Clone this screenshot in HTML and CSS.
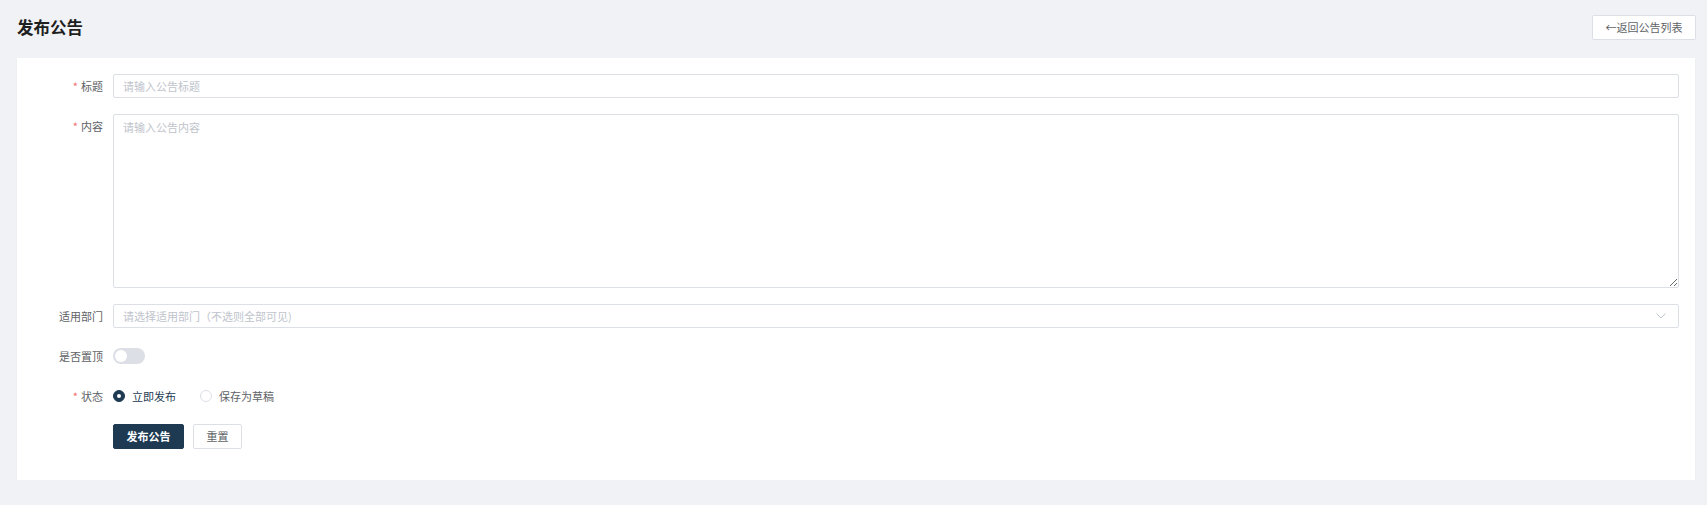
FILE: index.html
```html
<!DOCTYPE html>
<html lang="zh-CN">
<head>
<meta charset="utf-8">
<title>发布公告</title>
<link rel="stylesheet" href="styles.css">
</head>
<body>
<div class="page">
  <div class="header">
    <h1 class="title">发布公告</h1>
    <button class="btn btn-back">←返回公告列表</button>
  </div>
  <div class="card">
    <form class="form">
      <div class="row">
        <label class="label"><span class="req">*</span>标题</label>
        <input class="input" type="text" placeholder="请输入公告标题">
      </div>
      <div class="row">
        <label class="label label-top"><span class="req">*</span>内容</label>
        <textarea class="input textarea" placeholder="请输入公告内容"></textarea>
      </div>
      <div class="row">
        <label class="label">适用部门</label>
        <div class="input select">
          <span class="ph">请选择适用部门（不选则全部可见)</span>
          <svg class="chev" width="10" height="6" viewBox="0 0 10 6"><path d="M0.5 0.5 L5 5 L9.5 0.5" fill="none" stroke="#c0c4cc" stroke-width="1"/></svg>
        </div>
      </div>
      <div class="row">
        <label class="label">是否置顶</label>
        <span class="switch"><span class="knob"></span></span>
      </div>
      <div class="row">
        <label class="label"><span class="req">*</span>状态</label>
        <div class="radios">
          <span class="radio checked"><span class="dot"></span><span class="rtext">立即发布</span></span>
          <span class="radio"><span class="dot"></span><span class="rtext">保存为草稿</span></span>
        </div>
      </div>
      <div class="row">
        <span class="label"></span>
        <div class="actions">
          <button type="button" class="btn btn-primary">发布公告</button>
          <button type="button" class="btn btn-plain">重置</button>
        </div>
      </div>
    </form>
  </div>
</div>
</body>
</html>
```

FILE: styles.css
```css
* { box-sizing: border-box; }
html, body {
  margin: 0;
  padding: 0;
  background: #f0f2f5;
  font-family: "Noto Sans CJK SC", "Noto Sans", sans-serif;
  color: #303133;
  font-size: 11px;
}
.page {
  padding: 15px 11px 0 17px;
}
.header {
  display: flex;
  justify-content: space-between;
  align-items: center;
  height: 25px;
  padding-right: 0;
}
.title {
  margin: 0;
  font-size: 16.5px;
  font-weight: 700;
  color: #1f1f1f;
  line-height: 25px;
}
.btn {
  font-family: inherit;
  font-size: 11px;
  height: 25px;
  border-radius: 2px;
  cursor: pointer;
  padding: 0 13px;
  line-height: 23px;
}
.btn-back {
  background: #fff;
  border: 1px solid #dcdfe6;
  color: #606266;
  width: 104px;
  padding: 0;
}
.card {
  margin-top: 18px;
  margin-right: 1px;
  background: #fff;
  height: 422px;
  padding: 16px 16px 0 16px;
  box-shadow: 0 1px 2px rgba(0,0,0,0.04);
}
.form {
  display: flex;
  flex-direction: column;
  gap: 16px;
}
.row {
  display: flex;
  align-items: center;
  gap: 10px;
  min-height: 24px;
}
.row:has(.textarea) { align-items: flex-start; }
.label {
  width: 70px;
  flex: none;
  text-align: right;
  color: #606266;
  font-size: 11px;
  line-height: 24px;
}
.label-top { line-height: 24px; }
.req {
  color: #f56c6c;
  margin-right: 3px;
}
.input {
  flex: 1;
  height: 24px;
  border: 1px solid #dcdfe6;
  border-radius: 2px;
  padding: 0 9px;
  font-family: inherit;
  font-size: 11px;
  color: #606266;
  outline: none;
  background: #fff;
}
.input::placeholder { color: #c0c4cc; }
.textarea {
  height: 174px;
  padding: 3px 9px;
  resize: vertical;
  line-height: 18px;
}
.select {
  display: flex;
  align-items: center;
  justify-content: space-between;
  padding-right: 12px;
}
.ph { color: #c0c4cc; }
.switch {
  position: relative;
  width: 32px;
  height: 16px;
  border-radius: 8px;
  background: #dcdfe6;
  display: inline-block;
}
.knob {
  position: absolute;
  top: 2px;
  left: 2px;
  width: 12px;
  height: 12px;
  border-radius: 50%;
  background: #fff;
}
.radios {
  display: flex;
  gap: 24px;
  align-items: center;
}
.radio {
  display: inline-flex;
  align-items: center;
  gap: 7px;
  color: #606266;
}
.radio.checked { color: #1d3a52; }
.dot {
  width: 12px;
  height: 12px;
  border-radius: 50%;
  border: 1px solid #dcdfe6;
  background: #fff;
  position: relative;
  display: inline-block;
}
.radio.checked .dot {
  background: #1d3a52;
  border-color: #1d3a52;
}
.radio.checked .dot::after {
  content: "";
  position: absolute;
  width: 4px;
  height: 4px;
  border-radius: 50%;
  background: #fff;
  left: 3px;
  top: 3px;
}
.rtext { line-height: 24px; }
.actions {
  display: flex;
  gap: 9px;
}
.btn-primary {
  background: #1d3a52;
  border: 1px solid #1d3a52;
  color: #fff;
  font-weight: 700;
  width: 71px;
  padding: 0;
}
.btn-plain {
  background: #fff;
  border: 1px solid #dcdfe6;
  color: #606266;
  width: 49px;
  padding: 0;
}
```
